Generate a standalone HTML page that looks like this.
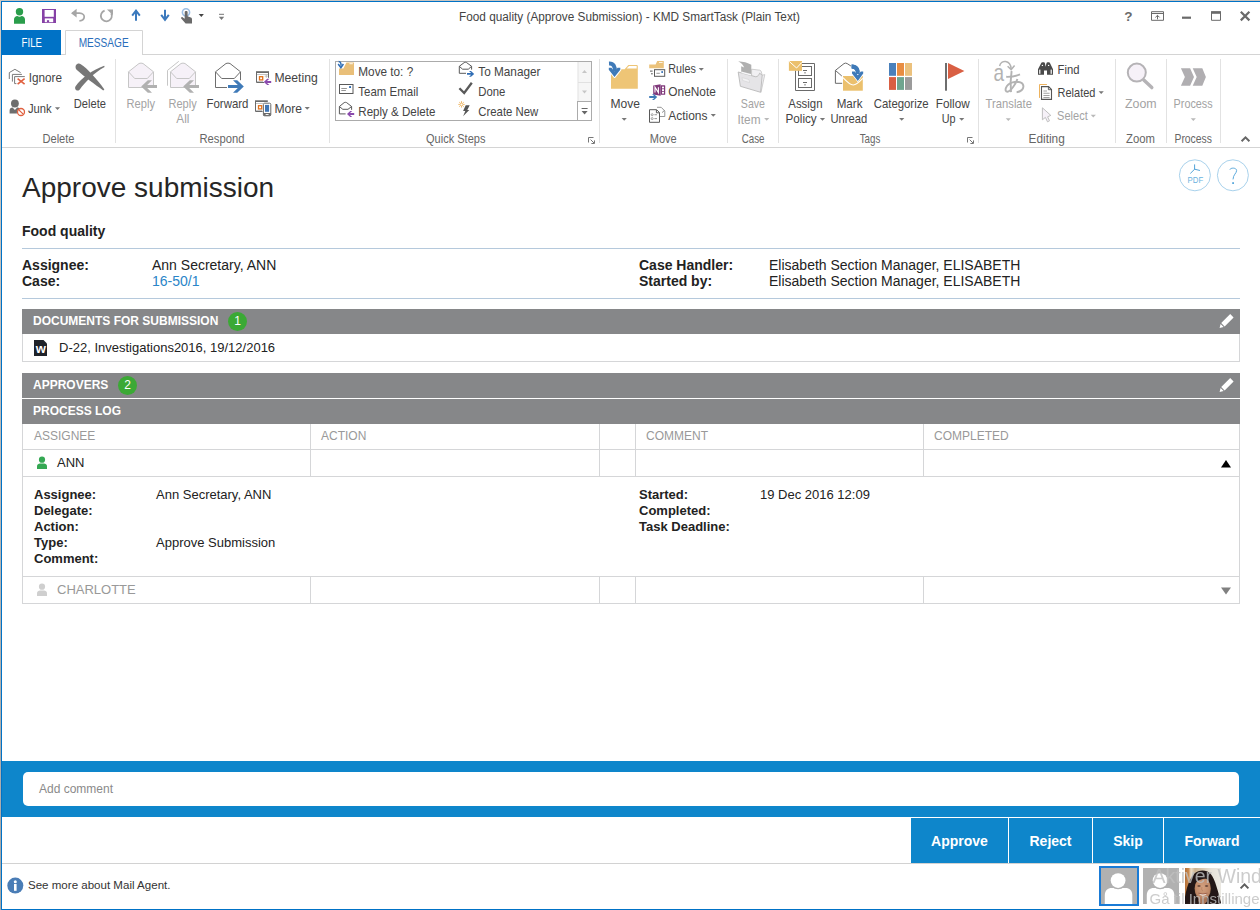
<!DOCTYPE html>
<html><head><meta charset="utf-8"><title>Food quality (Approve Submission) - KMD SmartTask</title>
<style>
html,body{margin:0;padding:0;background:#fff;}
body{width:1260px;height:910px;position:relative;overflow:hidden;font-family:"Liberation Sans",sans-serif;color:#222;}
.abs{position:absolute;white-space:nowrap;}
.b{font-weight:bold;}
.bar{background:#868789;}
.bt{position:absolute;left:11px;font-size:12px;line-height:14px;font-weight:bold;color:#fff;}
.badge{position:absolute;width:19px;height:19px;border-radius:50%;background:#3ba935;color:#fff;font-size:12px;line-height:19px;text-align:center;}
.hl{left:22px;width:1218px;height:1px;background:#d5d6d8;}
.vl{width:1px;background:#d5d6d8;}
.th{font-size:12px;line-height:14px;color:#999;}
.btn{top:818px;height:45px;background:#0e86cb;color:#fff;font-weight:bold;font-size:14px;line-height:47px;text-align:center;}
svg{display:block;overflow:visible;}
svg text{font-family:"Liberation Sans",sans-serif;}
</style></head><body>
<!-- ===== TITLE BAR + RIBBON ===== -->
<svg class="abs" style="left:0;top:0" width="1260" height="149" viewBox="0 0 1260 149">
<rect x="0" y="0" width="1260" height="149" fill="#fff"/>
<rect x="2" y="54" width="1258" height="1" fill="#d4d4d4"/>
<rect x="2" y="147" width="1258" height="1" fill="#d4d4d4"/>
<rect x="2" y="30" width="59" height="25" fill="#0072c6"/>
<path d="M65.5 55 V30.5 H142.5 V55" fill="#fff" stroke="#d4d4d4" stroke-width="1"/>
<rect x="66" y="54" width="76" height="1" fill="#fff"/>
<rect x="115.0" y="59" width="1" height="84" fill="#e2e2e2"/>
<rect x="329.0" y="59" width="1" height="84" fill="#e2e2e2"/>
<rect x="599.0" y="59" width="1" height="84" fill="#e2e2e2"/>
<rect x="727.0" y="59" width="1" height="84" fill="#e2e2e2"/>
<rect x="778.0" y="59" width="1" height="84" fill="#e2e2e2"/>
<rect x="978.0" y="59" width="1" height="84" fill="#e2e2e2"/>
<rect x="1115.0" y="59" width="1" height="84" fill="#e2e2e2"/>
<rect x="1166.0" y="59" width="1" height="84" fill="#e2e2e2"/>
<rect x="1220.0" y="59" width="1" height="84" fill="#e2e2e2"/>
<text x="459" y="21" font-size="12" fill="#444" textLength="341.0" lengthAdjust="spacingAndGlyphs">Food quality (Approve Submission) - KMD SmartTask (Plain Text)</text>
<text x="21.6" y="47" font-size="12.4" fill="#fff" textLength="20.3" lengthAdjust="spacingAndGlyphs">FILE</text>
<text x="78.7" y="47" font-size="12.4" fill="#2a6ebb" textLength="50.0" lengthAdjust="spacingAndGlyphs">MESSAGE</text>
<text x="28.7" y="81.7" font-size="12.4" fill="#444" textLength="33.3" lengthAdjust="spacingAndGlyphs">Ignore</text>
<text x="28" y="112.8" font-size="12.4" fill="#444" textLength="23.7" lengthAdjust="spacingAndGlyphs">Junk</text>
<text x="73.8" y="107.5" font-size="12.4" fill="#444" textLength="32.2" lengthAdjust="spacingAndGlyphs">Delete</text>
<text x="42.5" y="142.5" font-size="12.4" fill="#666" textLength="32.0" lengthAdjust="spacingAndGlyphs">Delete</text>
<text x="126.6" y="107.5" font-size="12.4" fill="#a3a3a3" textLength="28.4" lengthAdjust="spacingAndGlyphs">Reply</text>
<text x="168.5" y="107.5" font-size="12.4" fill="#a3a3a3" textLength="28.2" lengthAdjust="spacingAndGlyphs">Reply</text>
<text x="176.3" y="123.4" font-size="12.4" fill="#a3a3a3" textLength="13.1" lengthAdjust="spacingAndGlyphs">All</text>
<text x="206.5" y="107.5" font-size="12.4" fill="#444" textLength="41.9" lengthAdjust="spacingAndGlyphs">Forward</text>
<text x="274.4" y="82" font-size="12.4" fill="#444" textLength="43.3" lengthAdjust="spacingAndGlyphs">Meeting</text>
<text x="274.4" y="112.6" font-size="12.4" fill="#444" textLength="27.6" lengthAdjust="spacingAndGlyphs">More</text>
<text x="199.5" y="142.5" font-size="12.4" fill="#666" textLength="44.9" lengthAdjust="spacingAndGlyphs">Respond</text>
<text x="358.3" y="75.7" font-size="12.4" fill="#444" textLength="54.9" lengthAdjust="spacingAndGlyphs">Move to: ?</text>
<text x="358.3" y="96" font-size="12.4" fill="#444" textLength="60.0" lengthAdjust="spacingAndGlyphs">Team Email</text>
<text x="358.3" y="115.7" font-size="12.4" fill="#444" textLength="77.1" lengthAdjust="spacingAndGlyphs">Reply &amp; Delete</text>
<text x="478.3" y="75.7" font-size="12.4" fill="#444" textLength="62.2" lengthAdjust="spacingAndGlyphs">To Manager</text>
<text x="478.3" y="96" font-size="12.4" fill="#444" textLength="27.1" lengthAdjust="spacingAndGlyphs">Done</text>
<text x="478.3" y="115.7" font-size="12.4" fill="#444" textLength="60.0" lengthAdjust="spacingAndGlyphs">Create New</text>
<text x="426" y="142.5" font-size="12.4" fill="#666" textLength="59.4" lengthAdjust="spacingAndGlyphs">Quick Steps</text>
<text x="610.5" y="107.5" font-size="12.4" fill="#444" textLength="29.5" lengthAdjust="spacingAndGlyphs">Move</text>
<text x="668.3" y="73.3" font-size="12.4" fill="#444" textLength="27.5" lengthAdjust="spacingAndGlyphs">Rules</text>
<text x="668.3" y="96.3" font-size="12.4" fill="#444" textLength="47.5" lengthAdjust="spacingAndGlyphs">OneNote</text>
<text x="668.3" y="119.5" font-size="12.4" fill="#444" textLength="39.2" lengthAdjust="spacingAndGlyphs">Actions</text>
<text x="649.7" y="142.5" font-size="12.4" fill="#666" textLength="27.0" lengthAdjust="spacingAndGlyphs">Move</text>
<text x="740.8" y="107.5" font-size="12.4" fill="#a3a3a3" textLength="24.2" lengthAdjust="spacingAndGlyphs">Save</text>
<text x="737.5" y="123.5" font-size="12.4" fill="#a3a3a3" textLength="23.0" lengthAdjust="spacingAndGlyphs">Item</text>
<text x="741.7" y="142.5" font-size="12.4" fill="#666" textLength="22.8" lengthAdjust="spacingAndGlyphs">Case</text>
<text x="788.3" y="107.5" font-size="12.4" fill="#444" textLength="34.2" lengthAdjust="spacingAndGlyphs">Assign</text>
<text x="785.5" y="123.4" font-size="12.4" fill="#444" textLength="31.2" lengthAdjust="spacingAndGlyphs">Policy</text>
<text x="836.7" y="107.5" font-size="12.4" fill="#444" textLength="25.8" lengthAdjust="spacingAndGlyphs">Mark</text>
<text x="830.5" y="123.4" font-size="12.4" fill="#444" textLength="36.7" lengthAdjust="spacingAndGlyphs">Unread</text>
<text x="873.7" y="107.5" font-size="12.4" fill="#444" textLength="55.0" lengthAdjust="spacingAndGlyphs">Categorize</text>
<text x="935.8" y="107.5" font-size="12.4" fill="#444" textLength="33.9" lengthAdjust="spacingAndGlyphs">Follow</text>
<text x="941.7" y="123.4" font-size="12.4" fill="#444" textLength="13.8" lengthAdjust="spacingAndGlyphs">Up</text>
<text x="859.7" y="142.5" font-size="12.4" fill="#666" textLength="20.6" lengthAdjust="spacingAndGlyphs">Tags</text>
<text x="985.6" y="107.8" font-size="12.4" fill="#a3a3a3" textLength="46.4" lengthAdjust="spacingAndGlyphs">Translate</text>
<text x="1057.6" y="73.5" font-size="12.4" fill="#444" textLength="21.9" lengthAdjust="spacingAndGlyphs">Find</text>
<text x="1057.6" y="96.9" font-size="12.4" fill="#444" textLength="37.8" lengthAdjust="spacingAndGlyphs">Related</text>
<text x="1057.1" y="120.2" font-size="12.4" fill="#a3a3a3" textLength="30.6" lengthAdjust="spacingAndGlyphs">Select</text>
<text x="1028.6" y="142.5" font-size="12.4" fill="#666" textLength="36.2" lengthAdjust="spacingAndGlyphs">Editing</text>
<text x="1125" y="107.8" font-size="12.4" fill="#a3a3a3" textLength="31.7" lengthAdjust="spacingAndGlyphs">Zoom</text>
<text x="1126" y="142.5" font-size="12.4" fill="#666" textLength="28.9" lengthAdjust="spacingAndGlyphs">Zoom</text>
<text x="1173.6" y="107.8" font-size="12.4" fill="#a3a3a3" textLength="39.0" lengthAdjust="spacingAndGlyphs">Process</text>
<text x="1174.5" y="142.5" font-size="12.4" fill="#666" textLength="37.4" lengthAdjust="spacingAndGlyphs">Process</text>
<path d="M54.9 107.2 H60.1 L57.5 110.0 Z" fill="#777"/>
<path d="M304.59999999999997 107.0 H309.8 L307.2 109.8 Z" fill="#777"/>
<path d="M621.6 118.0 H626.8000000000001 L624.2 120.8 Z" fill="#777"/>
<path d="M698.6999999999999 68.0 H703.9 L701.3 70.8 Z" fill="#777"/>
<path d="M710.6999999999999 114.0 H715.9 L713.3 116.8 Z" fill="#777"/>
<path d="M764.1 118.0 H769.3000000000001 L766.7 120.8 Z" fill="#b9b9b9"/>
<path d="M819.9 118.0 H825.1 L822.5 120.8 Z" fill="#777"/>
<path d="M899.1 118.0 H904.3000000000001 L901.7 120.8 Z" fill="#777"/>
<path d="M959.1 118.0 H964.3000000000001 L961.7 120.8 Z" fill="#777"/>
<path d="M1005.6999999999999 118.2 H1010.9 L1008.3 121.0 Z" fill="#b9b9b9"/>
<path d="M1098.6000000000001 91.2 H1103.8 L1101.2 94.0 Z" fill="#777"/>
<path d="M1090.7 114.7 H1095.8999999999999 L1093.3 117.5 Z" fill="#b9b9b9"/>
<path d="M1190.7 118.2 H1195.8999999999999 L1193.3 121.0 Z" fill="#b9b9b9"/>
<path d="M198.70000000000002 14.1 H203.9 L201.3 16.9 Z" fill="#444"/>
<!-- QAT icons -->
<g id="qat">
  <circle cx="19.5" cy="11.8" r="3.7" fill="#2a9d4b"/>
  <path d="M14 23.7 V19.6 C14 17.2 15.6 16 17.4 16 C18.6 17 20.4 17 21.6 16 C23.4 16 25 17.2 25 19.6 V23.7 Z" fill="#2a9d4b"/>
  <rect x="42" y="9" width="14" height="14" fill="#8641a6"/>
  <rect x="44.6" y="10" width="9.2" height="6.8" fill="#fff"/>
  <rect x="44.8" y="18.4" width="8.4" height="3.8" fill="#fff"/>
  <rect x="46.9" y="20.2" width="2.2" height="2" fill="#8641a6"/>
  <path d="M72.2 13.2 H79.5 C83.2 13.2 84.2 15.6 84.2 16.8 C84.2 19 82.4 20.6 79.4 20.9" fill="none" stroke="#a6a6a6" stroke-width="1.7"/>
  <path d="M76.6 8.8 L71 13.2 L76.6 17.4 Z" fill="#a6a6a6"/>
  <path d="M104.6 10.6 A5.5 5.5 0 1 0 111.2 13.2" fill="none" stroke="#a6a6a6" stroke-width="1.8"/>
  <path d="M107 9.4 H113 V15.2 Z" fill="#a6a6a6"/>
  <path d="M136 20.8 V10.6 M132.2 15.6 L136 10.6 L139.8 15.6" fill="none" stroke="#3b79bd" stroke-width="2"/>
  <path d="M165 9.7 V19.8 M161.2 14.8 L165 19.8 L168.8 14.8" fill="none" stroke="#3b79bd" stroke-width="2"/>
  <circle cx="186" cy="12.3" r="3.6" fill="none" stroke="#9dbfe4" stroke-width="1.6"/>
  <path d="M184.7 12 C184.7 10.6 187.6 10.6 187.6 12 V16.2 L190.8 17.4 C191.8 17.8 192 18.6 192 19.6 V23.4 H185.6 L181.2 18.6 C180.6 17.6 181.8 16.6 182.8 17.4 L184.7 18.8 Z" fill="#6a6a6a"/>
  <rect x="219" y="13.8" width="5" height="1" fill="#777"/>
  <path d="M218.8 16.8 H224.2 L221.5 20 Z" fill="#777"/>
</g>
<!-- window controls -->
<g id="wctl" fill="#6a6a6a">
  <text x="1124.3" y="21" font-size="13.5" font-weight="bold" fill="#6a6a6a">?</text>
  <path d="M1151.5 11.7 H1163.5 V20.3 H1151.5 Z M1151.5 13.5 H1163.5" fill="none" stroke="#6a6a6a" stroke-width="1"/>
  <path d="M1157.5 19.3 V15.4 M1155.4 17.4 L1157.5 15.3 L1159.6 17.4" fill="none" stroke="#6a6a6a" stroke-width="1"/>
  <rect x="1182" y="16.6" width="9" height="2.2"/>
  <path d="M1211.5 12 H1220.5 V20.3 H1211.5 Z" fill="none" stroke="#6a6a6a" stroke-width="1"/>
  <rect x="1211" y="11.2" width="10" height="2.6"/>
  <path d="M1240.8 11.8 L1249.4 20.4 M1249.4 11.8 L1240.8 20.4" fill="none" stroke="#6a6a6a" stroke-width="2.2"/>
  <path d="M1241.6 141.2 L1245.5 137.3 L1249.4 141.2" fill="none" stroke="#666" stroke-width="2"/>
</g>
<!-- Delete group -->
<g id="gdelete">
  <path d="M9.3 79 V72.6 L14.9 69.3 L20.6 72.6" fill="none" stroke="#7a7a7a" stroke-width="1"/>
  <path d="M12.4 81.6 V74.4 H21.9" fill="none" stroke="#7a7a7a" stroke-width="1"/>
  <path d="M16.4 83.6 H14.6 V76.6 H24.8" fill="none" stroke="#7a7a7a" stroke-width="1"/>
  <path d="M17.6 78.6 L24.6 84.2 M24.6 78.6 L17.6 84.2" fill="none" stroke="#e0603f" stroke-width="1.6"/>
  <circle cx="14.9" cy="103.5" r="3.9" fill="#6e6e6e"/>
  <path d="M9.6 113.6 V110.4 C9.6 108.4 11 107.4 12.6 107.4 L14.9 110 L17.2 107.4 C18.4 107.4 19 107.8 19.6 108.4 C17 109.6 16.4 112 17.2 113.6 Z" fill="#6e6e6e"/>
  <circle cx="21" cy="112" r="3.5" fill="#fff" stroke="#e0603f" stroke-width="1.3"/>
  <path d="M18.6 109.6 L23.4 114.4" stroke="#e0603f" stroke-width="1.3"/>
  <path d="M80.8 64.2 C87 68 97 79 104.4 89.4 L103.2 90.4 C95 84.6 84 76.6 76.6 69.8 C74.8 67.8 75.4 64.6 77.6 63.8 C78.8 63.4 79.8 63.6 80.8 64.2 Z" fill="#777"/>
  <path d="M104.2 65.8 C93 69.6 81 78.6 75.6 86.2 C74.2 88.6 76 91 78.6 90.4 C79.2 90.2 79.4 90 79.8 89.6 C84.6 82.6 94 72.8 104.6 67 Z" fill="#777"/>
</g>
<!-- Respond group -->
<g id="grespond">
  <path d="M128.5 71.8 L139.0 63.5 Q141.0 62.7 143.0 63.5 L153.5 71.8 V87.5 H128.5 Z" fill="#f6f1f8" stroke="#c6c6c6" stroke-width="1"/>
  <path d="M128.5 71.8 L134.7 78.5 H147.3 L153.5 71.8" fill="none" stroke="#c6c6c6" stroke-width="1"/>
  <path d="M141.2 86.5 L147.79999999999998 80.2 H152.0 L147.2 85 H157.0 V88 H147.2 L152.0 92.8 H147.79999999999998 Z" fill="#b1b1b1"/>
  <path d="M178.8 61.3 L167.5 70.4 V85.7" fill="none" stroke="#c6c6c6" stroke-width="1"/>
  <path d="M170.5 71.8 L181.0 63.5 Q183.0 62.7 185.0 63.5 L195.5 71.8 V87.5 H170.5 Z" fill="#f6f1f8" stroke="#c6c6c6" stroke-width="1"/>
  <path d="M170.5 71.8 L176.7 78.5 H189.3 L195.5 71.8" fill="none" stroke="#c6c6c6" stroke-width="1"/>
  <path d="M183.2 86.5 L189.79999999999998 80.2 H194.0 L189.2 85 H199.0 V88 H189.2 L194.0 92.8 H189.79999999999998 Z" fill="#b1b1b1"/>
  <path d="M227.0 87.5 H215.5 V71.8 L226.0 63.5 Q228.0 62.7 230.0 63.5 L240.5 71.8 V80.2" fill="#fff" stroke="#6e6e6e" stroke-width="1"/>
  <path d="M215.5 71.8 L221.7 78.5 H234.3 L240.5 71.8" fill="none" stroke="#6e6e6e" stroke-width="1"/>
  <path d="M243.8 86.5 L237.20000000000002 80.2 H233.0 L237.8 85 H228.0 V88 H237.8 L233.0 92.8 H237.20000000000002 Z" fill="#3f7ab8"/>
</g>
<g id="gmeeting">
  <path d="M256.5 72 V82.5 H264 M268.5 72 V77.8" fill="none" stroke="#6a6a6a" stroke-width="1"/>
  <rect x="256" y="71.2" width="13" height="1.8" fill="#6a6a6a"/>
  <path d="M257.5 74.5 H268 M257.5 81.5 H263.5" stroke="#8a8a8a" stroke-width="1" stroke-dasharray="1 1" fill="none"/>
  <rect x="259.5" y="76.7" width="3.2" height="3.2" fill="#fff" stroke="#e2721c" stroke-width="1.3"/>
  <path d="M266.3 74.6 V77.8 M264.7 76.2 H267.9" stroke="#b8b8b8" stroke-width="0.8"/>
  <path d="M263.8 81.9 L267.2 78.8 H269.4 L267 80.9 H271.2 V82.9 H267 L269.4 85 H267.2 Z" fill="#8a4aad"/>
  <path d="M255.5 101 V111.5 H262.6" fill="none" stroke="#6a6a6a" stroke-width="1"/>
  <rect x="255" y="100.3" width="12.8" height="1.7" fill="#6a6a6a"/>
  <path d="M256.5 103.5 H263 M256.5 110.5 H262.5" stroke="#8a8a8a" stroke-width="1" stroke-dasharray="1 1" fill="none"/>
  <rect x="258.5" y="105.7" width="3.2" height="3.2" fill="#fff" stroke="#e2721c" stroke-width="1.3"/>
  <rect x="263.4" y="103.2" width="7.4" height="12.6" rx="1.2" fill="#fff" stroke="#6a6a6a" stroke-width="1"/>
  <rect x="263.4" y="113" width="7.4" height="2.8" fill="#6a6a6a"/>
  <rect x="265.6" y="114" width="3" height="0.9" fill="#fff"/>
  <rect x="265" y="104.9" width="4.1" height="6.9" fill="#3f76b5"/>
</g>
<!-- Quick steps -->
<g id="gquick">
  <rect x="578" y="62" width="13" height="40" fill="#f6f6f6"/>
  <rect x="335.5" y="61.5" width="256" height="59" fill="none" stroke="#ababab" stroke-width="1"/>
  <rect x="577.5" y="62" width="1" height="40" fill="#e1e1e1"/>
  <rect x="578" y="82" width="13" height="1" fill="#e1e1e1"/>
  <rect x="577.5" y="101.5" width="14" height="19" fill="#fff" stroke="#ababab" stroke-width="1"/>
  <path d="M582 73 H587 L584.5 70 Z" fill="#c6c6c6"/>
  <path d="M582 90.4 H587 L584.5 93.4 Z" fill="#c6c6c6"/>
  <rect x="581.6" y="108" width="6" height="1" fill="#666"/>
  <path d="M581.6 111 H587.6 L584.6 114.4 Z" fill="#666"/>
  <!-- move to folder -->
  <path d="M339 75 V68.4 H343.4 L346.4 62.4 H354 V75 Z" fill="#e9bf79"/>
  <rect x="349.4" y="63.3" width="3.4" height="0.9" fill="#fff"/>
  <path d="M338.6 61.6 C340.6 61.6 341.2 63.2 341 65.8" fill="none" stroke="#2f6db5" stroke-width="1.5"/>
  <path d="M338.2 64 L340.9 67.6 L343.4 64" fill="none" stroke="#2f6db5" stroke-width="1.5"/>
  <!-- team email -->
  <rect x="339.5" y="84.5" width="13.5" height="9" fill="#fff" stroke="#595959" stroke-width="1"/>
  <rect x="341.3" y="88" width="5.6" height="0.9" fill="#8a8a8a"/>
  <rect x="341.3" y="90" width="4.6" height="0.9" fill="#8a8a8a"/>
  <rect x="349.1" y="86.1" width="1.9" height="1.9" fill="#2f6db5"/>
  <!-- reply & delete -->
  <path d="M345.6 113.9 H339.4 V106.5 L344.2 102.6 Q345.4 102 346.6 102.6 L351.6 106.5 V109.8" fill="none" stroke="#595959" stroke-width="1"/>
  <path d="M339.4 106.5 L342.8 109.3 H348 L351.6 106.5" fill="none" stroke="#595959" stroke-width="1"/>
  <path d="M347 113.95 L350.2 111 H352.2 L350 113 H354.2 V114.9 H350 L352.2 116.9 H350.2 Z" fill="#8a4aad"/>
  <!-- to manager -->
  <path d="M466 73.3 H459.3 V66.3 L464.2 62.6 Q465.4 62 466.6 62.6 L471.6 66.3 V69.6" fill="none" stroke="#595959" stroke-width="1"/>
  <path d="M459.3 66.3 L462.6 69.2 H468.3 L471.6 66.3" fill="none" stroke="#595959" stroke-width="1"/>
  <path d="M474.2 73.9 L471 71 H469 L471.2 72.95 H467 V74.85 H471.2 L469 76.8 H471 Z" fill="#2f6db5"/>
  <!-- done -->
  <path d="M459.4 88.2 L464.2 93 L471.8 82.8" fill="none" stroke="#5a5a5a" stroke-width="2.3"/>
  <!-- create new -->
  <path d="M465.7 105.2 H469.7 L467.3 109.9 H469.3 L463.1 116.2 L465.3 111.1 H463.1 Z" fill="#555"/>
  <path d="M461.5 101.2 V107.6 M458.3 104.4 H464.7 M459.2 102.1 L463.8 106.7 M463.8 102.1 L459.2 106.7" stroke="#eeb35e" stroke-width="0.9" fill="none"/>
  <circle cx="461.5" cy="104.4" r="1" fill="#fff"/>
  <!-- dialog launchers -->
  <path d="M588.5 142.5 V137.5 H593.5" fill="none" stroke="#777" stroke-width="1"/>
  <path d="M590.6 139.6 L594 143 M594.5 140.4 V143.5 H591.4" fill="none" stroke="#777" stroke-width="1"/>
  <path d="M967.5 142.5 V137.5 H972.5" fill="none" stroke="#777" stroke-width="1"/>
  <path d="M969.6 139.6 L973 143 M973.5 140.4 V143.5 H970.4" fill="none" stroke="#777" stroke-width="1"/>
</g>
<!-- Move group -->
<g id="gmove">
  <path d="M611 88.8 V69.2 H624.6 L628.4 64.9 H636.6 Q637.8 64.9 637.8 66.1 V88.8 Z" fill="#eec576"/>
  <path d="M626.6 68.6 L629 66 H636.7 V68.6 Z" fill="#fff"/>
  <path d="M609 63.5 C614 63.3 616.6 66.6 616.2 71.6" fill="none" stroke="#fff" stroke-width="6"/>
  <path d="M608.8 67.8 H611.4 L614.5 71.4 L617.6 67.8 H620.3 V69.8 L614.5 77 L608.8 69.8 Z" fill="#fff" stroke="#fff" stroke-width="2" stroke-linejoin="round"/>
  <path d="M609 63.5 C613.6 63.3 615.2 66.6 614.8 71.6" fill="none" stroke="#3f7ab8" stroke-width="4"/>
  <path d="M608.8 67.8 H611.4 L614.5 71.4 L617.6 67.8 H620.3 V69.8 L614.5 77 L608.8 69.8 Z" fill="#3f7ab8"/>
  <!-- rules -->
  <path d="M649.2 68.2 V64.4 H655.6 L657.2 61.1 H663.8 V68.2 Z" fill="#ebc27a"/>
  <rect x="659" y="62.1" width="3.6" height="0.8" fill="#fff"/>
  <rect x="654.5" y="69.7" width="10.2" height="6.6" fill="#fff" stroke="#595959" stroke-width="1"/>
  <rect x="656.4" y="72.8" width="3.4" height="0.9" fill="#8a8a8a"/>
  <rect x="661.3" y="71.2" width="1.7" height="1.7" fill="#2f6db5"/>
  <rect x="650" y="70.6" width="2.6" height="1" fill="#595959"/>
  <rect x="651" y="73.3" width="1.8" height="1" fill="#595959"/>
  <!-- onenote -->
  <path d="M653.2 85.6 L660.6 84.2 V95.8 L653.2 94.4 Z" fill="#80397b"/>
  <path d="M660.6 85.2 H664.6 Q665.2 85.2 665.2 85.8 V94.2 Q665.2 94.8 664.6 94.8 H660.6 Z" fill="#80397b"/>
  <rect x="662" y="86.6" width="2" height="1.8" fill="#fff"/>
  <rect x="662" y="89.2" width="2" height="1.8" fill="#fff"/>
  <rect x="662" y="91.8" width="2" height="1.8" fill="#fff"/>
  <path d="M655 92.6 V87.2 L658.4 92.6 V87.2" fill="none" stroke="#fff" stroke-width="1.1"/>
  <path d="M657.2 97.05 L654 94.2 H652 L654.2 96.1 H649.2 V98 H654.2 L652 99.9 H654 Z" fill="#3f7ab8"/>
  <!-- actions -->
  <path d="M657 107.3 L661.2 107.3 L664.8 111 V116.5 H660" fill="none" stroke="#8a8a8a" stroke-width="0.9"/>
  <path d="M662 112.6 L664.6 110.4" fill="none" stroke="#8a8a8a" stroke-width="0.9"/>
  <path d="M649.5 109.7 H656.6 L659.5 112.6 V122.3 H649.5 Z" fill="#fff" stroke="#595959" stroke-width="1"/>
  <path d="M656.4 109.8 V112.8 H659.4" fill="none" stroke="#595959" stroke-width="1"/>
  <circle cx="652.2" cy="114.7" r="1" fill="none" stroke="#8a8a8a" stroke-width="0.8"/>
  <circle cx="652.2" cy="118.6" r="1" fill="none" stroke="#8a8a8a" stroke-width="0.8"/>
  <rect x="654.4" y="114.3" width="2.6" height="0.9" fill="#8a8a8a"/>
  <rect x="654.4" y="118.2" width="2.6" height="0.9" fill="#8a8a8a"/>
</g>
<!-- Case: save item -->
<g id="gcase">
  <path d="M751.6 69.2 L759.8 70.2 Q761.2 70.6 761.4 72 L762.2 75.2 L764.8 74.6 L761 92.2 L751.6 80 Z" fill="#f1f0f3" stroke="#c4c4c4" stroke-width=".8"/>
  <path d="M738.2 61.3 C743 61.6 748 62.8 751.3 64.8 V75 L741.2 73.2 V66.3 L744.2 67.4 C743 64.8 741 62.6 738.2 61.3 Z" fill="#b0b0b0"/>
  <path d="M738.2 72 L751.4 75.6 L755.8 76.8 C758 76.6 758.8 75 759.6 73.2 L762.2 75.2 L760.6 92.3 L740.4 86.3 Z" fill="#e5e4e7" stroke="#b9b9b9" stroke-width=".9"/>
  <path d="M741.4 71.4 L751 74 V75.6 L741.4 73 Z" fill="#f7f7f9"/>
  <path d="M742 77.6 L749 79.6 L749.6 82.6 L742.6 80.4 Z" fill="#f1f1f3" stroke="#cdcdcd" stroke-width=".5"/>
</g>
<!-- Tags -->
<g id="gtags">
  <path d="M795.5 70.4 V90.5 H814.5 V63.5 H802" fill="none" stroke="#6a6a6a" stroke-width="1"/>
  <rect x="798.5" y="66.5" width="13" height="9" fill="#fff" stroke="#6a6a6a" stroke-width="1"/>
  <rect x="798.5" y="78.5" width="13" height="9" fill="#fff" stroke="#6a6a6a" stroke-width="1"/>
  <rect x="803" y="70" width="4" height="1" fill="#6a6a6a"/><rect x="804.5" y="72" width="1" height="1.5" fill="#6a6a6a"/>
  <rect x="803" y="82" width="4" height="1" fill="#6a6a6a"/><rect x="804.5" y="84" width="1" height="1.5" fill="#6a6a6a"/>
  <rect x="788.9" y="61" width="13.1" height="9.8" fill="#ebc06d"/>
  <path d="M789.2 61.4 L796.6 68 L801.8 62.4" fill="none" stroke="#fff" stroke-width="1"/>
  <!-- mark unread -->
  <path d="M842.2 83.3 H835.4 V70.4 L844 63.6 Q845.6 62.6 847.2 63.6 L851.2 66.2" fill="none" stroke="#6a6a6a" stroke-width="1"/>
  <path d="M835.4 70.4 L841.8 76" fill="none" stroke="#6a6a6a" stroke-width="1"/>
  <rect x="843" y="76" width="19.8" height="14.7" fill="#ebc06d"/>
  <path d="M843 77.6 C848 83 850.6 85 853.2 85 C855.8 85 858.4 83 862.8 78.4" fill="none" stroke="#fff" stroke-width="1.1"/>
  <g stroke="#fff" stroke-width="1.4" paint-order="stroke">
  <path d="M851.6 64.4 C857 64.2 860 67.6 859.8 74 H855.8 C856 70 854.8 68.6 851.6 68.4 Z" fill="#3f7ab8"/>
  <path d="M852 71.6 H854.8 L857.8 75.2 L860.8 71.6 H863.2 V73.6 L857.8 81 L852 73.6 Z" fill="#3f7ab8"/>
  </g>
  <path d="M851.6 64.4 C857 64.2 860 67.6 859.8 74 H855.8 C856 70 854.8 68.6 851.6 68.4 Z" fill="#3f7ab8"/>
  <!-- categorize -->
  <rect x="889" y="63" width="7" height="12.8" fill="#4a80bb"/><rect x="897" y="63" width="7" height="12.8" fill="#e88d42"/><rect x="905" y="63" width="7" height="12.8" fill="#ebc17d"/>
  <rect x="889" y="77.1" width="7" height="12.8" fill="#d95f43"/><rect x="897" y="77.1" width="7" height="12.8" fill="#6fa58f"/><rect x="905" y="77.1" width="7" height="12.8" fill="#9b9b9b"/>
  <!-- follow up -->
  <rect x="945" y="63" width="2" height="27.7" fill="#6e6e6e"/>
  <path d="M948 63 L964.4 70.9 L948 79 Z" fill="#d95f43"/>
</g>
<!-- Editing -->
<g id="gedit">
  <text x="993.4" y="81.4" font-size="24" fill="#b3b3b3" textLength="10.6" lengthAdjust="spacingAndGlyphs">a</text>
  <path d="M999.6 66 C1001 59.6 1010.4 59.6 1011.2 69" fill="none" stroke="#b3b3b3" stroke-width="1.5"/>
  <path d="M1007.6 66.2 L1011.2 69.6 L1014.6 65.6" fill="none" stroke="#b3b3b3" stroke-width="1.5"/>
  <path d="M1006.2 76.8 C1011 77 1016 76 1020 74.4" fill="none" stroke="#b3b3b3" stroke-width="1.9"/>
  <path d="M1011.6 71 C1010.6 78 1010.4 86 1011 92.2" fill="none" stroke="#b3b3b3" stroke-width="1.9"/>
  <path d="M1017.4 79 C1015.6 84.4 1010.6 91.4 1007.4 91.8 C1004 91.8 1005.2 84.6 1012.6 82.4 C1019 80.6 1023.6 83 1023.4 86.6 C1023.2 89.6 1020.4 91.6 1016.6 92.2" fill="none" stroke="#b3b3b3" stroke-width="1.9"/>
  <!-- find binoculars -->
  <path d="M1038 74.8 V69.2 L1041 63.4 Q1041.4 62.2 1042.6 62.2 H1043.6 Q1044.8 62.2 1045 63.4 L1045.6 66.8 L1046.4 63.4 Q1046.6 62.2 1047.8 62.2 H1048.8 Q1049.8 62.2 1050.2 63.4 L1053 69.2 V74.8 H1047 V70.6 H1044 V74.8 Z" fill="#4a4a4a"/>
  <rect x="1039.2" y="69.6" width="1.2" height="4.2" fill="#fff"/><rect x="1050.6" y="69.6" width="1.2" height="4.2" fill="#fff"/>
  <circle cx="1042.4" cy="65.4" r="0.7" fill="#fff"/><circle cx="1048.6" cy="65.4" r="0.7" fill="#fff"/>
  <!-- related -->
  <path d="M1039.5 97.9 V84.5 H1046.9" fill="none" stroke="#eeb35e" stroke-width="1"/>
  <path d="M1041.5 86.6 H1048.6 L1051.5 89.5 V99.4 H1041.5 Z" fill="#fff" stroke="#555" stroke-width="1.1"/>
  <path d="M1048.4 86.8 V89.7 H1051.4" fill="none" stroke="#555" stroke-width="0.9"/>
  <rect x="1043.4" y="90.6" width="3.6" height="0.8" fill="#8a8a8a"/><rect x="1043.4" y="92.8" width="6.2" height="0.8" fill="#8a8a8a"/><rect x="1043.4" y="95" width="6.2" height="0.8" fill="#8a8a8a"/><rect x="1043.4" y="97.1" width="6.2" height="0.8" fill="#8a8a8a"/>
  <!-- select cursor -->
  <path d="M1042.4 107.8 V119.8 L1045.4 117.4 L1047.5 121.8 L1049.5 120.8 L1047.6 116.8 L1050.8 115.4 Z" fill="#f6f1f8" stroke="#b9b9b9" stroke-width="0.9"/>
</g>
<g id="gzoom">
  <path d="M1143.8 80 L1151.8 87.6" stroke="#b5b3b6" stroke-width="3.4" stroke-linecap="round" fill="none"/>
  <circle cx="1136.8" cy="72.6" r="9" fill="#f6f1f8" stroke="#b5b3b6" stroke-width="2"/>
  <path d="M1180.9 68.2 H1190.1 L1194 77 L1190.1 85.8 H1180.9 L1184.9 77 Z" fill="#b0aeb1"/>
  <path d="M1192.7 68.2 H1202.3 L1205.9 77 L1202.3 85.8 H1192.7 L1196.7 77 Z" fill="#b0aeb1"/>
</g>

</svg>
<!-- ===== CONTENT AREA ===== -->
<div class="abs" style="left:22px;top:171px;font-size:28px;line-height:34px;color:#262626;">Approve submission</div>
<div class="abs b" style="left:22px;top:223px;font-size:14px;line-height:16px;">Food quality</div>
<div class="abs" style="left:22px;top:248px;width:1218px;height:1px;background:#b5c9dc;"></div>
<div class="abs b" style="left:22px;top:257px;font-size:14px;line-height:16px;">Assignee:<br>Case:</div>
<div class="abs" style="left:152px;top:257px;font-size:14px;line-height:16px;">Ann Secretary, ANN<br><span style="color:#2a85c8">16-50/1</span></div>
<div class="abs b" style="left:639px;top:257px;font-size:14px;line-height:16px;">Case Handler:<br>Started by:</div>
<div class="abs" style="left:769px;top:257px;font-size:14px;line-height:16px;">Elisabeth Section Manager, ELISABETH<br>Elisabeth Section Manager, ELISABETH</div>
<div class="abs" style="left:22px;top:298px;width:1218px;height:1px;background:#b5c9dc;"></div>

<!-- PDF + help circle icons -->
<svg class="abs" style="left:1175px;top:155px" width="80" height="42" viewBox="1175 155 80 42">
  <circle cx="1194.9" cy="175.3" r="15.5" fill="#fff" stroke="#a9d2ec" stroke-width="1"/>
  <circle cx="1232.9" cy="175.3" r="15.5" fill="#fff" stroke="#a9d2ec" stroke-width="1"/>
  <path d="M1194.6 164.8 L1194.6 169.2 L1199.6 170.4 M1194.6 169.2 L1190.6 173.2" fill="none" stroke="#3f97d3" stroke-width="0.9" stroke-linecap="round"/>
  <text x="1187.6" y="182.7" font-size="9.2" fill="#6cb2e0" textLength="15.6" lengthAdjust="spacingAndGlyphs" style="font-family:'Liberation Sans',sans-serif">PDF</text>
  <path d="M1229.9 169.6 C1230.4 167.6 1236.6 167.4 1236.6 170.6 C1236.6 173.2 1233.2 174.6 1233 179.4" fill="none" stroke="#5aa9dc" stroke-width="1"/>
  <rect x="1232.2" y="182.2" width="1.8" height="1.8" fill="#5aa9dc"/>
</svg>

<!-- DOCUMENTS FOR SUBMISSION -->
<div class="abs bar" style="left:22px;top:309px;width:1218px;height:25px;"><span class="bt" style="top:5px">DOCUMENTS FOR SUBMISSION</span><span class="badge" style="left:206px;top:3px">1</span></div>
<div class="abs" style="left:22px;top:334px;width:1216px;height:27px;border:1px solid #d5d6d8;border-top:none;"></div>
<svg class="abs" style="left:34px;top:340px" width="14" height="16" viewBox="0 0 14 16"><path d="M0 0 H9.5 L13 3.5 V16 H0 Z" fill="#1f2229"/><text x="6.9" y="13.2" text-anchor="middle" font-size="13" font-weight="bold" fill="#fff" style="font-family:'Liberation Sans',sans-serif">w</text></svg>
<div class="abs" style="left:59px;top:340px;font-size:13px;line-height:15px;">D-22, Investigations2016, 19/12/2016</div>

<!-- APPROVERS -->
<div class="abs bar" style="left:22px;top:373px;width:1218px;height:25px;"><span class="bt" style="top:5px">APPROVERS</span><span class="badge" style="left:96px;top:3px">2</span></div>
<!-- PROCESS LOG -->
<div class="abs bar" style="left:22px;top:399px;width:1218px;height:25px;"><span class="bt" style="top:5px">PROCESS LOG</span></div>

<!-- pencils -->
<svg class="abs" style="left:1219px;top:313px" width="16" height="16" viewBox="0 0 16 16"><path d="M11.2 1 L14.6 4.4 L5.6 13.4 L2.2 10 Z M1.6 11 L4.6 14 L0.6 15 Z" fill="#fff"/></svg>
<svg class="abs" style="left:1219px;top:377px" width="16" height="16" viewBox="0 0 16 16"><path d="M11.2 1 L14.6 4.4 L5.6 13.4 L2.2 10 Z M1.6 11 L4.6 14 L0.6 15 Z" fill="#fff"/></svg>

<!-- table -->
<div class="abs" style="left:22px;top:424px;width:1216px;height:179px;border:1px solid #d5d6d8;border-top:none;"></div>
<div class="abs hl" style="top:449px"></div>
<div class="abs hl" style="top:476px"></div>
<div class="abs hl" style="top:576px"></div>
<div class="abs vl" style="left:310px;top:424px;height:52px"></div>
<div class="abs vl" style="left:599px;top:424px;height:52px"></div>
<div class="abs vl" style="left:635px;top:424px;height:52px"></div>
<div class="abs vl" style="left:923px;top:424px;height:52px"></div>
<div class="abs vl" style="left:310px;top:577px;height:26px"></div>
<div class="abs vl" style="left:599px;top:577px;height:26px"></div>
<div class="abs vl" style="left:635px;top:577px;height:26px"></div>
<div class="abs vl" style="left:923px;top:577px;height:26px"></div>
<div class="abs th" style="left:34px;top:429px">ASSIGNEE</div>
<div class="abs th" style="left:321px;top:429px">ACTION</div>
<div class="abs th" style="left:646px;top:429px">COMMENT</div>
<div class="abs th" style="left:934px;top:429px">COMPLETED</div>

<svg class="abs" style="left:36px;top:456px" width="12" height="14" viewBox="0 0 12 14"><circle cx="6" cy="3.7" r="3.1" fill="#34a853"/><path d="M1 13 V10.2 C1 8.2 2.6 7.4 4 7.4 H8 C9.4 7.4 11 8.2 11 10.2 V13 Z" fill="#34a853"/></svg>
<div class="abs" style="left:57px;top:455px;font-size:13px;line-height:15px;">ANN</div>
<svg class="abs" style="left:1221px;top:460px" width="10" height="8" viewBox="0 0 10 8"><path d="M5 0 L10 7.4 H0 Z" fill="#000"/></svg>

<div class="abs b" style="left:34px;top:487px;font-size:13px;line-height:16px;">Assignee:<br>Delegate:<br>Action:<br>Type:<br>Comment:</div>
<div class="abs" style="left:156px;top:487px;font-size:13px;line-height:16px;">Ann Secretary, ANN<br><br><br>Approve Submission</div>
<div class="abs b" style="left:639px;top:487px;font-size:13px;line-height:16px;">Started:<br>Completed:<br>Task Deadline:</div>
<div class="abs" style="left:760px;top:487px;font-size:13px;line-height:16px;">19 Dec 2016 12:09</div>

<svg class="abs" style="left:36px;top:583px" width="12" height="14" viewBox="0 0 12 14"><circle cx="6" cy="3.7" r="3.1" fill="#cfcfcf"/><path d="M1 13 V10.2 C1 8.2 2.6 7.4 4 7.4 H8 C9.4 7.4 11 8.2 11 10.2 V13 Z" fill="#cfcfcf"/></svg>
<div class="abs" style="left:57px;top:582px;font-size:13px;line-height:15px;color:#999;">CHARLOTTE</div>
<svg class="abs" style="left:1221px;top:587px" width="10" height="8" viewBox="0 0 10 8"><path d="M0 0.4 H10 L5 7.6 Z" fill="#808080"/></svg>

<!-- comment bar -->
<div class="abs" style="left:2px;top:761px;width:1258px;height:56px;background:#0e86cb;"></div>
<div class="abs" style="left:23px;top:772px;width:1216px;height:34px;background:#fff;border-radius:5px;"></div>
<div class="abs" style="left:39px;top:782px;font-size:12px;line-height:14px;color:#8a8a8a;">Add comment</div>

<!-- buttons -->
<div class="abs btn" style="left:911px;width:97px;">Approve</div>
<div class="abs btn" style="left:1009px;width:83px;">Reject</div>
<div class="abs btn" style="left:1093px;width:70px;">Skip</div>
<div class="abs btn" style="left:1164px;width:96px;">Forward</div>
<!-- footer -->
<div class="abs" style="left:2px;top:863px;width:1258px;height:1px;background:#d2d2d2;"></div>
<svg class="abs" style="left:7px;top:877px" width="17" height="17" viewBox="0 0 17 17"><circle cx="8.3" cy="8.6" r="8" fill="#4a7db6"/><circle cx="8.3" cy="4.7" r="1.5" fill="#fff"/><rect x="7" y="7" width="2.6" height="6.8" fill="#fff"/></svg>
<svg class="abs" style="left:28px;top:876px" width="150" height="18" viewBox="0 0 150 18"><text x="0" y="13" font-size="11.5" fill="#333" textLength="142.5" lengthAdjust="spacingAndGlyphs">See more about Mail Agent.</text></svg>

<!-- avatars -->
<div class="abs" style="left:1099px;top:866px;width:36px;height:36px;border:2px solid #1a7bd6;"></div>
<svg class="abs" style="left:1101px;top:868px" width="36" height="36" viewBox="0 0 36 36"><rect width="36" height="36" fill="#b1b1b1"/><path d="M3.8 36 V27 C3.8 22.4 7 20 10.6 20 H24.6 C28.2 20 31.3 22.4 31.3 27 V36 Z" fill="#fff"/><circle cx="17.1" cy="12.6" r="8.7" fill="#b1b1b1"/><circle cx="17.1" cy="12.6" r="7.4" fill="#fff"/></svg>
<svg class="abs" style="left:1143px;top:868px" width="36" height="36" viewBox="0 0 36 36"><rect width="36" height="36" fill="#b1b1b1"/><path d="M3.8 36 V27 C3.8 22.4 7 20 10.6 20 H24.6 C28.2 20 31.3 22.4 31.3 27 V36 Z" fill="#fff"/><circle cx="17.1" cy="12.6" r="8.7" fill="#b1b1b1"/><circle cx="17.1" cy="12.6" r="7.4" fill="#fff"/></svg>
<svg class="abs" style="left:1185px;top:868px" width="36" height="36" viewBox="0 0 36 36">
  <defs><clipPath id="pc"><rect width="36" height="36"/></clipPath>
  <linearGradient id="pbg" x1="0" x2="1"><stop offset="0" stop-color="#a85f28"/><stop offset="0.14" stop-color="#c98a50"/><stop offset="0.2" stop-color="#ecdfcb"/><stop offset="0.3" stop-color="#cdb491"/><stop offset="0.7" stop-color="#e6e1d8"/><stop offset="1" stop-color="#eceae4"/></linearGradient>
  <radialGradient id="pface" cx="0.5" cy="0.45" r="0.6"><stop offset="0" stop-color="#d3a07f"/><stop offset="0.7" stop-color="#c08a69"/><stop offset="1" stop-color="#9c6a4e"/></radialGradient>
  <filter id="pbl" x="-10%" y="-10%" width="120%" height="120%"><feGaussianBlur stdDeviation="0.55"/></filter></defs>
  <g clip-path="url(#pc)"><g filter="url(#pbl)">
  <rect x="-2" y="-2" width="40" height="40" fill="url(#pbg)"/>
  <path d="M-1 38 C0 25 3 12 9.5 5.6 C13.5 1.6 21.5 1.4 25.4 5.6 C30.4 11.4 33 24 37 38 Z" fill="#231915"/>
  <rect x="13.4" y="28" width="8.6" height="10" fill="#a67256"/>
  <ellipse cx="17.7" cy="20.6" rx="8.1" ry="11.6" fill="url(#pface)"/>
  <path d="M8.6 18 C9.4 9.6 14.6 6.4 19 6.8 C23.6 7.2 26.6 11 27.2 18.4 C25.4 13 22.4 10.4 19.2 10.8 C15.2 11.2 10.8 13.6 8.6 18 Z" fill="#231915"/>
  <ellipse cx="14" cy="18" rx="1.7" ry="0.75" fill="#3d261e" opacity=".85"/>
  <ellipse cx="21.6" cy="18" rx="1.7" ry="0.75" fill="#3d261e" opacity=".85"/>
  <path d="M17 19 C16.6 21.4 16.6 22.4 17.8 22.8" fill="none" stroke="#a5714f" stroke-width=".7" opacity=".7"/>
  <path d="M13.6 25.4 Q17.8 30 22.2 25.4 Q17.8 27.2 13.6 25.4 Z" fill="#f6efe9"/>
  <path d="M13.4 25.2 Q17.8 26.8 22.4 25.2" fill="none" stroke="#8e4f3f" stroke-width=".7"/>
  <path d="M-2 38 C2 33.4 8 32.4 13.6 33.6 L17.8 38 L22 33.6 C28 32.4 33 33.4 38 38 Z" fill="#2b1f1b"/>
  </g></g>
</svg>
<!-- watermark -->
<div class="abs" style="left:1152.5px;top:863.5px;font-size:19.5px;line-height:24px;color:#c0c0c0;opacity:.8;">Aktiver Windows</div>
<div class="abs" style="left:1149.5px;top:889.5px;font-size:15px;line-height:17px;color:#c0c0c0;opacity:.8;">Gå til Innstillinger</div>
<svg class="abs" style="left:1239px;top:882px" width="12" height="8" viewBox="0 0 12 8"><path d="M1.6 6.4 L5.5 2.4 L9.4 6.4" fill="none" stroke="#5e5e5e" stroke-width="2"/></svg>

<!-- window frame -->
<div class="abs" style="left:0;top:0;width:1px;height:910px;background:linear-gradient(#d2cbc4,#a8a8a8);"></div>
<div class="abs" style="left:1px;top:1px;width:1px;height:909px;background:#0072c6;"></div>
<div class="abs" style="left:0;top:0;width:1260px;height:1px;background:#c9c5c0;"></div>
<div class="abs" style="left:1px;top:1px;width:1259px;height:1px;background:#0072c6;"></div>
<div class="abs" style="left:1px;top:909px;width:1259px;height:1px;background:#0072c6;"></div>
</body></html>
